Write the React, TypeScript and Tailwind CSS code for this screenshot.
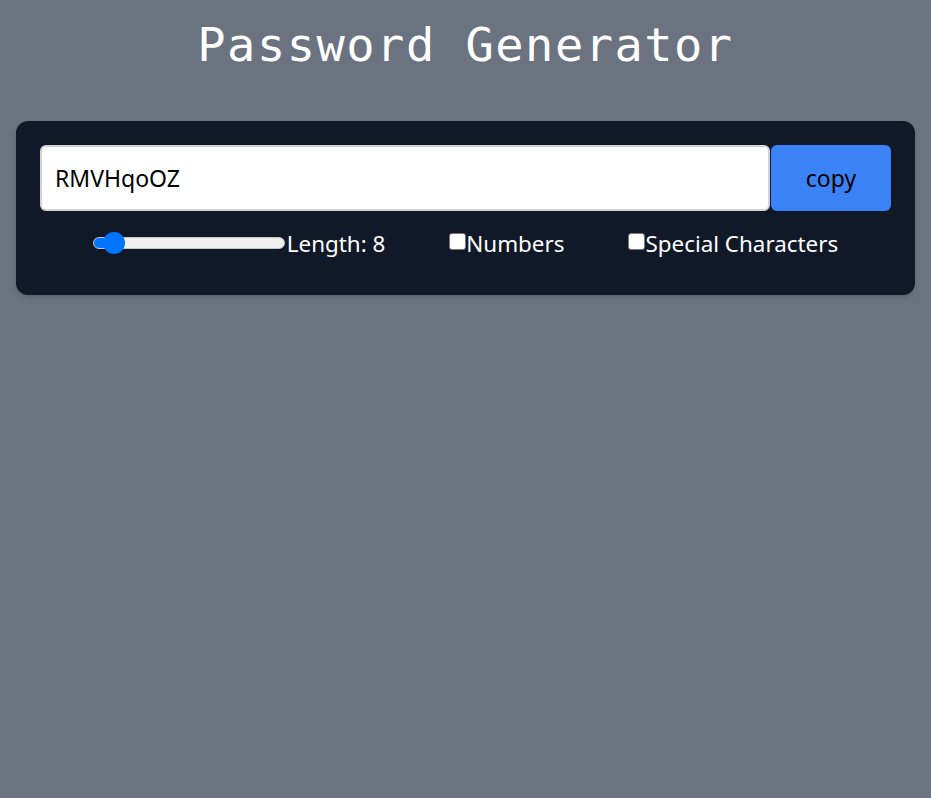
import React, { useState } from "react";

export default function App() {
  const [length, setLength] = useState(8);
  const [numbers, setNumbers] = useState(false);
  const [chars, setChars] = useState(false);
  const min = 5;
  const max = 60;
  const pct = ((length - min) / (max - min)) * 100;

  return (
    <div className="min-h-[798px] w-full bg-[#6b7280] pt-[17px] font-['Noto_Sans',sans-serif]">
      <h1 className="text-center text-[47px] leading-[56px] tracking-[1.5px] text-white font-['DejaVu_Sans_Mono',monospace]">
        Password Generator
      </h1>
      <div className="mx-4 mt-[48px] rounded-xl bg-[#111827] px-6 pt-6 pb-[34px] shadow-md">
        <div className="flex">
          <input
            type="text"
            readOnly
            value="RMVHqoOZ"
            className="h-[66px] flex-1 rounded-md border-2 border-[#d4d4d8] bg-white px-[13px] text-[23px] text-black outline-none"
          />
          <button className="ml-px h-[66px] w-[120px] rounded-md bg-[#3b82f6] text-[23px] text-black">
            copy
          </button>
        </div>
        <div className="mt-[15px] flex h-[35px] items-center justify-center gap-x-16 text-[22.4px] text-white">
          <div className="flex items-center">
            <input
              type="range"
              min={min}
              max={max}
              value={length}
              onChange={(e) => setLength(Number(e.target.value))}
              className="h-3 w-[192px] cursor-pointer appearance-none rounded-full border border-[#c4c4c4] [&::-webkit-slider-thumb]:h-[22px] [&::-webkit-slider-thumb]:w-[22px] [&::-webkit-slider-thumb]:appearance-none [&::-webkit-slider-thumb]:rounded-full [&::-webkit-slider-thumb]:bg-[#0075ff]"
              style={{
                background: `linear-gradient(to right, #0075ff 0%, #0075ff ${pct}%, #efefef ${pct}%, #efefef 100%)`,
              }}
            />
            <label className="ml-[2px]">Length: {length}</label>
          </div>
          <div className="flex items-center">
            <input
              type="checkbox"
              checked={numbers}
              onChange={() => setNumbers(!numbers)}
              className="mb-[3px] h-[17px] w-[17px] cursor-pointer appearance-none rounded-[3px] border-[1.5px] border-[#767676] bg-white checked:bg-[#0075ff]"
            />
            <label>Numbers</label>
          </div>
          <div className="flex items-center">
            <input
              type="checkbox"
              checked={chars}
              onChange={() => setChars(!chars)}
              className="mb-[3px] h-[17px] w-[17px] cursor-pointer appearance-none rounded-[3px] border-[1.5px] border-[#767676] bg-white checked:bg-[#0075ff]"
            />
            <label>Special Characters</label>
          </div>
        </div>
      </div>
    </div>
  );
}
